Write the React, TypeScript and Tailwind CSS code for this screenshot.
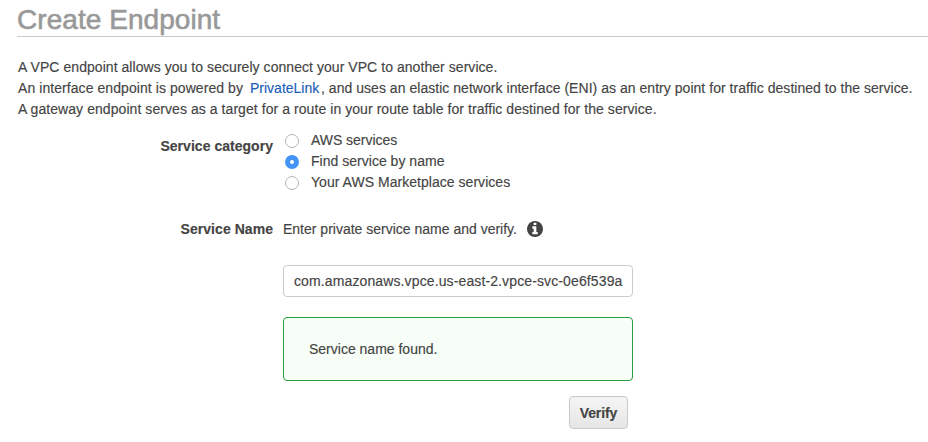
import React, { useState } from "react";

function InfoIcon() {
  return (
    <svg viewBox="0 128 1536 1536" className="-mt-px size-4" fill="#444">
      <path d="M1024 1376v-160q0-14-9-23t-23-9h-96v-512q0-14-9-23t-23-9h-320q-14 0-23 9t-9 23v160q0 14 9 23t23 9h96v320h-96q-14 0-23 9t-9 23v160q0 14 9 23t23 9h448q14 0 23-9t9-23zm-128-896v-160q0-14-9-23t-23-9h-192q-14 0-23 9t-9 23v160q0 14 9 23t23 9h192q14 0 23-9t9-23zm640 416q0 209-103 385.5t-279.5 279.5-385.5 103-385.5-103-279.5-279.5-103-385.5 103-385.5 279.5-279.5 385.5-103 385.5 103 279.5 279.5 103 385.5z" />
    </svg>
  );
}

function Option({ label, className, checked, onSelect }: { label: string; className: string; checked: boolean; onSelect: () => void }) {
  return (
    <label className="flex h-[21px] items-center">
      <input type="radio" name="category" checked={checked} onChange={onSelect} className="sr-only" />
      <span
        className={
          checked
            ? "mt-px flex size-[14px] items-center justify-center rounded-full bg-[#4295f7]"
            : "mt-px size-[14px] rounded-full border border-[#b4b4b4] bg-white"
        }
      >
        {checked && <span className="size-1 rounded-full bg-white" />}
      </span>
      <span className={"ml-3 " + className}>{label}</span>
    </label>
  );
}

export default function App() {
  const [category, setCategory] = useState(1);
  return (
    <main className="h-[442px] w-[928px] overflow-hidden bg-white pl-[17px] font-['Liberation_Sans',Arial,sans-serif] text-[14px] leading-[21px] whitespace-nowrap text-[#444] [-webkit-text-stroke:0.15px]">
      <h1 className="h-[37px] border-b border-[#ccc] pt-1 text-[28px] leading-[32px] tracking-[0.05px] text-[#999] [-webkit-text-stroke:0.6px]">Create Endpoint</h1>
      <div className="mt-5 pl-px">
        <p><span className="tracking-[0.053px]">A VPC endpoint allows you to securely connect your VPC to another service.</span></p>
        <p className="flex">
          <span className="w-[232px] tracking-[0.07px]">An interface endpoint is powered by</span>
          <a className="w-[71px] tracking-[0px] text-[#2160b8]">PrivateLink</a>
          <span className="tracking-[0.035px]">, and uses an elastic network interface (ENI) as an entry point for traffic destined to the service.</span>
        </p>
        <p><span className="tracking-[0.065px]">A gateway endpoint serves as a target for a route in your route table for traffic destined for the service.</span></p>
      </div>
      <section className="mt-[10px] flex">
        <div className="w-[256px] pt-[6px] text-right font-bold tracking-[0.03px]">Service category</div>
        <div className="ml-3">
          <Option label="AWS services" className="tracking-[-0.04px]" checked={category === 0} onSelect={() => setCategory(0)} />
          <Option label="Find service by name" className="tracking-[0.02px]" checked={category === 1} onSelect={() => setCategory(1)} />
          <Option label="Your AWS Marketplace services" className="tracking-[0.035px]" checked={category === 2} onSelect={() => setCategory(2)} />
        </div>
      </section>
      <section className="mt-[26px] flex">
        <div className="w-[256px] text-right font-bold tracking-[0.05px]">Service Name</div>
        <div className="ml-[10px] w-[350px]">
          <div className="flex h-[21px] items-center">
            <span className="w-[244px] tracking-[0px]">Enter private service name and verify.</span>
            <InfoIcon />
          </div>
          <div className="mt-[25px] flex h-8 items-center rounded-[4px] border border-[#ccc] px-[10px]">
            <span className="tracking-[0.12px]">com.amazonaws.vpce.us-east-2.vpce-svc-0e6f539a</span>
          </div>
          <div className="mt-5 flex h-16 items-center rounded-[4px] border border-[#2a9d3c] bg-[#f6fef7] pl-[25px]">
            <span className="tracking-[0px]">Service name found.</span>
          </div>
          <button className="mt-[15px] ml-[286px] flex h-[33px] w-[59px] items-center justify-center rounded-[4px] border border-[#c9c9c9] bg-linear-to-b from-[#f5f5f5] to-[#e6e6e6] pt-px font-bold tracking-[-0.1px]">Verify</button>
        </div>
      </section>
    </main>
  );
}
